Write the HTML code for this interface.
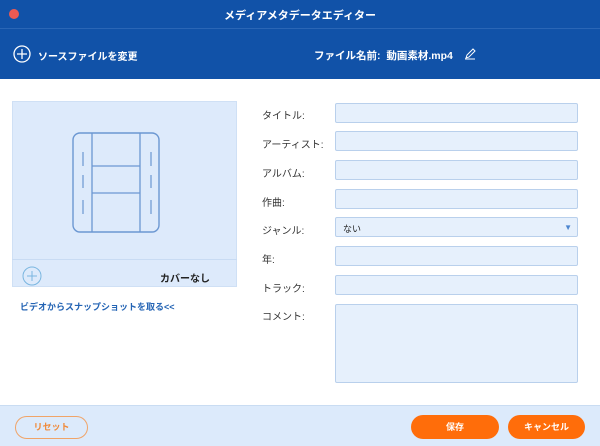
<!DOCTYPE html><html><head><meta charset="utf-8"><style>
*{margin:0;padding:0;box-sizing:border-box}
body{width:600px;height:446px;overflow:hidden;background:#fff;font-family:"Liberation Sans","Noto Sans CJK JP",sans-serif;position:relative}
.a{position:absolute}
.top{left:0;top:0;width:600px;height:79px;background:#1152a8}
.lab{font-size:10px;color:#333;left:262px}
.in{left:335px;width:243px;height:20px;background:#e6f0fc;border:1px solid #b9d0ec;border-radius:2px}
</style></head><body>
<div class="a top"></div>
<div class="a" style="left:0;top:28px;width:600px;height:1px;background:#2a66b6"></div>
<div class="a" style="left:9px;top:9px;width:10px;height:10px;border-radius:50%;background:#ee5a52"></div>
<div class="a" style="left:0;top:7px;width:600px;text-align:center;color:#fff;font-size:11px;font-weight:bold">メディアメタデータエディター</div>
<svg class="a" style="left:13px;top:45px" width="18" height="18"><circle cx="9" cy="9" r="8" fill="none" stroke="#fff" stroke-width="1.3"/><path d="M9 4v10M4 9h10" stroke="#fff" stroke-width="1.3"/></svg>
<div class="a" style="left:38px;top:48px;color:#fff;font-size:10px;font-weight:bold">ソースファイルを変更</div>
<div class="a" style="left:314px;top:48px;color:#fff;font-size:10.5px;font-weight:bold">ファイル名前:&nbsp; 動画素材.mp4</div>
<svg class="a" style="left:463px;top:46px" width="14" height="14"><path d="M3 12l1-3 6-6 2 2-6 6z M2 13h10" fill="none" stroke="#fff" stroke-width="1"/></svg>
<div class="a" style="left:12px;top:101px;width:225px;height:186px;background:#ddeafb;border:1px solid #cfe0f5"></div>
<div class="a" style="left:12px;top:259px;width:225px;height:1px;background:#c8dbf3"></div>
<svg class="a" style="left:70px;top:130px" width="92" height="108"><rect x="3" y="3" width="86" height="99" rx="7" fill="none" stroke="#6b97d2" stroke-width="1.4"/><path d="M22 3v99M70 3v99M22 36h48M22 63h48" stroke="#6b97d2" stroke-width="1.3"/><path d="M13 22v14M13 45v13M13 70v14M81 22v14M81 45v13M81 70v14" stroke="#6b97d2" stroke-width="1.2"/></svg>
<svg class="a" style="left:22px;top:266px" width="20" height="20"><circle cx="10" cy="10" r="9" fill="none" stroke="#7ab6e0" stroke-width="1"/><path d="M10 5v10M5 10h10" stroke="#7ab6e0"/></svg>
<div class="a" style="left:160px;top:270px;font-size:10px;color:#222;font-weight:bold">カバーなし</div>
<div class="a" style="left:20px;top:300px;font-size:9px;color:#2464b4;font-weight:bold">ビデオからスナップショットを取る&lt;&lt;</div>
<div class="a lab" style="top:107px">タイトル:</div><div class="a in" style="top:103px"></div>
<div class="a lab" style="top:136px">アーティスト:</div><div class="a in" style="top:131px"></div>
<div class="a lab" style="top:165px">アルバム:</div><div class="a in" style="top:160px"></div>
<div class="a lab" style="top:194px">作曲:</div><div class="a in" style="top:189px"></div>
<div class="a lab" style="top:222px">ジャンル:</div><div class="a in" style="top:217px"><span style="position:absolute;left:7px;top:4px;font-size:9px;color:#222">ない</span><span style="position:absolute;right:5px;top:5px;font-size:8px;color:#4d86cf">▼</span></div>
<div class="a lab" style="top:251px">年:</div><div class="a in" style="top:246px"></div>
<div class="a lab" style="top:280px">トラック:</div><div class="a in" style="top:275px"></div>
<div class="a lab" style="top:308px">コメント:</div><div class="a in" style="top:304px;height:79px"></div>
<div class="a" style="left:0;top:405px;width:600px;height:41px;background:#dceafb;border-top:1px solid #c9dcf2"></div>
<div class="a" style="left:15px;top:416px;width:73px;height:23px;border:1px solid #f0a468;border-radius:12px;color:#f08a3a;font-size:9px;text-align:center;line-height:21px;font-weight:bold">リセット</div>
<div class="a" style="left:411px;top:415px;width:88px;height:24px;background:#ff6d0a;border-radius:12px;color:#fff;font-size:9px;text-align:center;line-height:24px;font-weight:bold">保存</div>
<div class="a" style="left:508px;top:415px;width:77px;height:24px;background:#ff6d0a;border-radius:12px;color:#fff;font-size:9px;text-align:center;line-height:24px;font-weight:bold">キャンセル</div>
</body></html>
